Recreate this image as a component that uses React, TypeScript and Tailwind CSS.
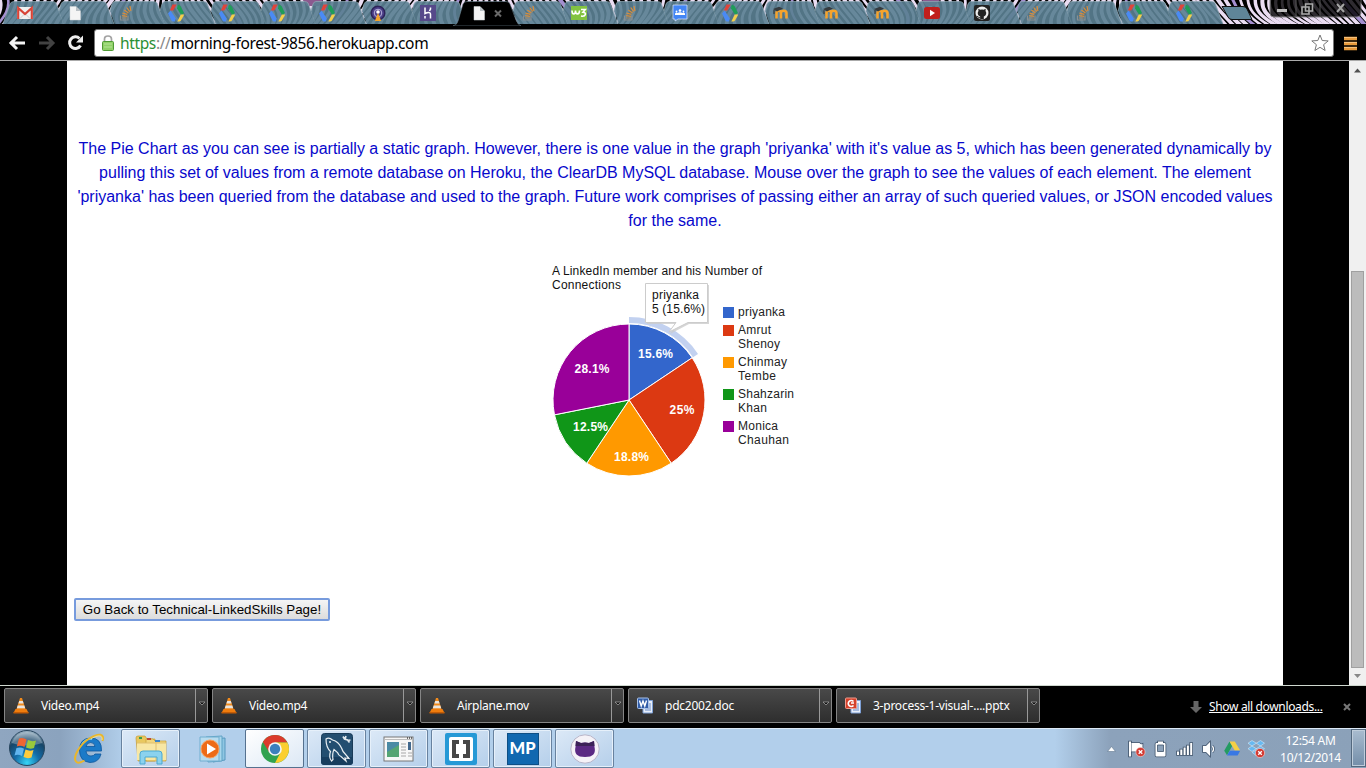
import React from "react";

const ZEBRA: string[] = [];
for (let i = -4; i < 220; i++) {
  const x = i * 6.6;
  const right = x > 1205;
  const a = right ? 4 * Math.sin(i * 0.3) : 9 * Math.sin(i * 0.13);
  const b = right ? -18 + 4 * Math.sin(i * 0.25) : 14 * Math.sin(i * 0.13 + 0.9);
  ZEBRA.push(
    `M${(x + a - (right ? 8 : 0)).toFixed(1)} -2 C${(x + b * 0.3).toFixed(1)} 8 ${(x - a).toFixed(1)} 16 ${(x - b).toFixed(1)} 28`
  );
}

const Doc = () => (
  <>
    <path d="M3 1.500h6l4.500 4.500v9H3z" fill="#f4f4f4" stroke="#cfd4d8" strokeWidth=".5" />
    <path d="M9 1.500v4.500h4.500z" fill="#b9c0c5" />
  </>
);
const Gmail = () => (
  <>
    <rect x="0" y="2" width="16" height="12" rx="1" fill="#f1f1f1" />
    <path d="M3 13.500 8 8.500l5 5" stroke="#ccc" fill="none" />
    <path d="M1.200 14V3L8 9l6.800-6v11" stroke="#d84437" strokeWidth="2.200" fill="none" />
  </>
);
const Stack = () => (
  <g fill="none" transform="translate(1.5 .5)">
    <path d="M1 10v4.500h7.500V10" stroke="#8a9094" strokeWidth="1.200" />
    <path d="M2.500 12.500h4.800" stroke="#9b8a72" strokeWidth="1.200" />
    <path d="M2.600 10.200l5 .6M3 7.600l4.900 1.300M4.800 4.600l4.200 2.800M7.200 2l3 4.200M10.500.5l.9 5" stroke="#d98d3a" strokeWidth="1.200" />
  </g>
);
const GDev = () => (
  <>
    <path d="M4.500-.5H8.700L5.300 5.500H1.800z" fill="#e0443a" />
    <path d="M9.800-.3q2 0 3 1.800L16 8l-2.800 2L9 3.200z" fill="#1f9d58" />
    <path d="M12.800 9.500h3.500L13 15.500q-.7 1-2 1H9.300z" fill="#f3cf4a" />
    <path d="M0 8.500 2.500 5.500 7.800 13.500 6.800 16.500H5q-1 0-1.800-1.500z" fill="#4a8af4" />
  </>
);
const Cast = () => (
  <>
    <circle cx="8" cy="8" r="6.800" fill="#4c3f88" stroke="#2d2459" strokeWidth="1.500" />
    <circle cx="8" cy="8" r="3.800" fill="none" stroke="#b8b2dc" />
    <circle cx="8" cy="7" r="1.800" fill="#fff" />
    <path d="M8 8l3.200 8H4.800z" fill="#f3a42c" />
  </>
);
const Heroku = () => (
  <>
    <rect width="16" height="16" fill="#56498a" />
    <path d="M5 2.500v6c3-1.500 5.500-1.300 5.500.5v4.500M10.500 2.500v1.500L9.500 6M5 11v2.500" stroke="#fff" strokeWidth="1.500" fill="none" />
  </>
);
const W3 = () => (
  <>
    <rect x="0" y="1" width="16" height="14" fill="#82c341" />
    <path d="M1 5.500c0 4.500 3.500 4.500 3.500 0 0 4.500 4 4.500 4 0M10 4.500h4.300L12 7.300c4 0 3 4.700-2 3.700" stroke="#fff" strokeWidth="1.600" fill="none" />
  </>
);
const Groups = () => (
  <>
    <path d="M1 0h14v14H6l-3 2v-2H1z" fill="#4285f4" />
    <path d="M1 0h14v14H6l-3 2v-2H1z" stroke="#dbe8ff" strokeWidth=".7" fill="none" />
    <path d="M3 10V8.500q1.500-1.500 2.500-.5 2.500-1.500 5 0 1-1 2.500.5V10z" fill="#fff" />
    <circle cx="8" cy="5.500" r="1.300" fill="#fff" /><circle cx="4.500" cy="6.500" r=".9" fill="#fff" /><circle cx="11.500" cy="6.500" r=".9" fill="#fff" />
  </>
);
const Moodle = () => (
  <>
    <path d="M3.500 13.500V8c0-3 4.500-3 4.500 0v5.500V8c0-3 5.500-3 5.500 0v5.500" stroke="#f7a42c" strokeWidth="2.500" fill="none" />
    <path d="M0 4 6 1.800l4 1.700-6 3z" fill="#363b3f" />
    <path d="M1 5v4" stroke="#333" />
  </>
);
const Tube = () => (
  <>
    <rect x="0" y="2" width="16" height="12" rx="2.500" fill="#c01f1c" />
    <path d="M6 4.800 11 8l-5 3.200z" fill="#fff" />
  </>
);
const Hub = () => (
  <>
    <rect width="16" height="16" rx="2" fill="#222" />
    <circle cx="8" cy="8" r="6.500" fill="#eee" />
    <path d="M6.200 14v-2.500C3.500 10.500 3.300 7.500 4.500 6L4.300 3.800l2 .9q1.700-.4 3.400 0l2-.9-.2 2.200c1.200 1.500 1 4.500-1.700 5.500V14z" fill="#222" />
    <path d="M3 11.500q1.500 0 2 1.300h1.500" stroke="#222" fill="none" />
  </>
);

const TABS: React.FC[] = [
  Gmail, Doc, Stack, GDev, GDev, GDev, GDev, Cast, Heroku, Doc, Stack, W3, Stack, Groups, GDev,
  Moodle, Moodle, Moodle, Tube, Hub, Stack, Stack, GDev, GDev,
];

function Tab({ Icon, i }: { Icon: React.FC; i: number }) {
  const active = i === 9;
  return (
    <div className={active ? "relative z-10 h-[26px] w-[50.4px] shrink-0" : "relative h-[26px] w-[50.4px] shrink-0"}>
      <svg className="block overflow-visible" width="50.4" height="26">
        {active ? (
          <path d="M-5 26Q-1 25 0 21L5 4Q6 1.500 9 1.500H48Q51 1.500 52 4L58 20Q60 25 63 26z" fill="#000" stroke="#6d8490" strokeWidth=".6" />
        ) : (
          <>
            <path
              d={i === 0 ? "M-1 24 6 4Q7 1.500 10 1.500H48Q51 1.500 52 3L60 24z" : "M9.600 24 5 11 7 4Q8 1.500 10 1.500H48Q51 1.500 52 3L60 24z"}
              fill="rgba(90,128,146,0.91)"
            />
            <path d={i === 0 ? "M-1 24 6 4Q7 1.500 10 1.500H48Q51 1.500 52 3L60 24" : "M5 11 7 4Q8 1.500 10 1.500H48Q51 1.500 52 3L60 24"} fill="none" stroke="#8fa9b5" strokeWidth=".7" />
          </>
        )}
        <g transform="translate(13 5)">
          <Icon />
        </g>
        {active && <path d="M37 10.500l6 6M43 10.500l-6 6" stroke="#6a6a6a" strokeWidth="2" />}
      </svg>
    </div>
  );
}

const COLORS = ["#3366cc", "#dc3912", "#ff9900", "#109618", "#990099"];
const VALUES = [5, 8, 6, 4, 9];

function Pie() {
  let acc = 0;
  const pt = (f: number, r: number) => {
    const t = f * 2 * Math.PI;
    return `${(89 + r * Math.sin(t)).toFixed(2)} ${(144 - r * Math.cos(t)).toFixed(2)}`;
  };
  const label = (x: number, y: number, s: string, w: number) => (
    <text key={s} x={x} y={y} textLength={w} fontSize="12" fontWeight="bold" fill="#fff">{s}</text>
  );
  const f0 = 5 / 32;
  const legend: [string, number, number, number][] = [
    ["priyanka", 60, 47, 0], ["Amrut", 78, 33, 1], ["Shenoy", 92, 42, -1], ["Chinmay", 110, 49, 2], ["Tembe", 124, 38, -1],
    ["Shahzarin", 142, 56, 3], ["Khan", 156, 29, -1], ["Monica", 174, 40, 4], ["Chauhan", 188, 51, -1],
  ];
  return (
    <svg width="270" height="230" className="block" fontFamily="'Liberation Sans', Arial, sans-serif">
      <text x="12" y="19" textLength="210" fontSize="12" fill="#111">A LinkedIn member and his Number of</text>
      <text x="12" y="33" textLength="69" fontSize="12" fill="#111">Connections</text>
      <path d={`M${pt(0, 77)}L${pt(0, 83)}A83 83 0 0 1 ${pt(f0, 83)}L${pt(f0, 77)}A77 77 0 0 0 ${pt(0, 77)}z`} fill="#c2d1f0" />
      {VALUES.map((v, i) => {
        const a = acc / 32;
        acc += v;
        return <path key={i} d={`M89 144L${pt(a, 76)}A76 76 0 0 1 ${pt(acc / 32, 76)}z`} fill={COLORS[i]} stroke="#fff" strokeWidth="1" />;
      })}
      {label(98, 102, "15.6%", 35)}
      {label(129.500, 158, "25%", 25)}
      {label(74, 205, "18.8%", 35)}
      {label(33, 175, "12.5%", 35)}
      {label(34.500, 117, "28.1%", 35)}
      {legend.map(([s, y, w, c]) => (
        <g key={s}>
          {c >= 0 && <rect x="183" y={y - 9} width="11" height="11" fill={COLORS[c]} />}
          <text x="198" y={y} textLength={w} fontSize="12" fill="#222">{s}</text>
        </g>
      ))}
      <path d="M107 29H169V68H149L130 78L137 68H107z" fill="#ccc" opacity=".8" />
      <path d="M105.500 27.500H167.500V66.500H148L129 76L136 66.500H105.500z" fill="#fff" stroke="#ccc" />
      <text x="112" y="43" textLength="47" fontSize="12" fill="#111">priyanka</text>
      <text x="112" y="57" textLength="53" fontSize="12" fill="#111">5 (15.6%)</text>
    </svg>
  );
}

const Cone = () => (
  <svg width="16" height="17" viewBox="0 0 16 17">
    <path d="M7 1h2l3.500 11h-9z" fill="#f08a1c" />
    <path d="M6.200 4h3.600l.8 2.500H5.400zM4.700 8.500h6.600l.9 2.700H3.800z" fill="#e9e4de" />
    <path d="M2.500 12h11l2 4H.5z" fill="#ef7d0e" />
    <path d="M.5 15h15v1.500H.5z" fill="#c55c05" />
  </svg>
);
const Office = ({ word }: { word: boolean }) => (
  <svg width="16" height="17" viewBox="0 0 16 17">
    <path d="M6 3.500h9.500V16H6z" fill="#e8effa" stroke="#7ea0d6" />
    <path d="M9 7h5M9 9h5M9 11h5M8 13h6" stroke="#6689c4" />
    <rect x=".5" y="1" width="11" height="10.500" rx="1" fill={word ? "#315da8" : "#d5412b"} stroke={word ? "#a8c1e8" : "#ee9c8e"} />
    {word ? <path d="M2.500 3.500 4.200 9 6 4l1.800 5 1.700-5.500" stroke="#fff" strokeWidth="1.400" fill="none" /> : <path d="M8.500 4.500A3 3 0 1 0 8.500 8.500M6 6h3" stroke="#fff" strokeWidth="1.600" fill="none" />}
  </svg>
);

const DOWNLOADS = [
  { name: "Video.mp4", icon: <Cone /> },
  { name: "Video.mp4", icon: <Cone /> },
  { name: "Airplane.mov", icon: <Cone /> },
  { name: "pdc2002.doc", icon: <Office word /> },
  { name: "3-process-1-visual-....pptx", icon: <Office word={false} /> },
];

const Orb = () => (
  <svg width="40" height="38" viewBox="0 0 40 38">
    <defs>
      <radialGradient id="orb" cx=".5" cy=".92" r=".9">
        <stop offset="0" stopColor="#36d5f6" /><stop offset=".4" stopColor="#136ba7" /><stop offset=".75" stopColor="#174567" /><stop offset="1" stopColor="#9bb3c4" />
      </radialGradient>
    </defs>
    <circle cx="20" cy="19" r="17.500" fill="url(#orb)" stroke="#28465f" />
    <path d="M4.500 14Q9 3 20 3t15.500 11Q20 19 4.500 14z" fill="#fff" opacity=".28" />
    <path d="M12 9.500q4-1.500 7.500 1L17.500 18q-4-2-7.700-.5z" fill="#ef6533" />
    <path d="M21 11q4 2 8 .5L27 19q-4 1.500-8-.5z" fill="#9bc93c" />
    <path d="M9.500 19q4-1.500 7.500.8L15 27q-4-2-7.500-.5z" fill="#61b5ee" />
    <path d="M18.500 20.500q4 2 8 .5l-2 7.500q-4 1.500-8-.5z" fill="#fdcc3d" />
  </svg>
);
const IE = () => (
  <svg width="34" height="34" viewBox="0 0 34 34">
    <path d="M29.500 19H14q.5 5 5 5 2.800 0 4-2h6q-2 8.500-11 8.500Q7.500 29.500 7.500 18T18.500 6Q30 6 29.500 19zM14 14.500h9q-.5-4-4.300-4T14 14.500z" fill="#1b7ac8" stroke="#0c579c" strokeWidth=".8" />
    <path d="M10 12Q14 6.500 20 7" stroke="#7cd1f8" strokeWidth="1.500" fill="none" />
    <path d="M30.500 9C33 2 27 .5 18 6 8 12 .5 25 4 29.500c1.500 2 5 1 8.500-1" fill="none" stroke="#e9b62c" strokeWidth="2" />
    <path d="M30 8C31 2.500 25 3 19 7" fill="none" stroke="#f9e283" />
  </svg>
);
const Folder = () => (
  <svg width="34" height="34" viewBox="0 0 34 34">
    <path d="M2 6q0-2 2-2h7l2 3h8v22H4z" fill="#e9c85e" stroke="#c69b35" strokeWidth=".7" />
    <path d="M12 7h7l2 2h11v20H12z" fill="#f2d67c" stroke="#c69b35" strokeWidth=".7" />
    <path d="M3 11h29v17H3z" fill="#f8e7a4" />
    <path d="M3 11h29M22 10v18" stroke="#dfc070" />
    <path d="M5 5h3v2H5z" fill="#3b9c4c" /><path d="M13 6h4v2h-4z" fill="#bd4a35" /><path d="M21 8h5v2h-5z" fill="#3b86c9" />
    <path d="M6 32V22q0-3 3-3h16q3 0 3 3v10h-5v-7H11v7z" fill="#8bd2ee" stroke="#4ba9d2" />
  </svg>
);
const Player = () => (
  <svg width="32" height="30" viewBox="0 0 32 30">
    <path d="M14 5l14-1v22l-12 2z" fill="#8fc6e2" stroke="#5799bf" />
    <path d="M9 3l16-1v25l-14 1z" fill="#a9d7ec" stroke="#5fa2c5" />
    <path d="M3 3h19v24H3z" fill="#b8dcef" stroke="#71aed0" />
    <circle cx="13" cy="15" r="9" fill="#ed6b17" stroke="#f8a05f" />
    <path d="M10 9.500 19 15l-9 5.500z" fill="#fff" />
  </svg>
);
const Chrome = () => (
  <svg width="30" height="30" viewBox="-15 -15 30 30">
    <circle r="14" fill="#31a350" />
    <path d="M-12.100-7.100 -5.600 3.500 0-6.500H12.400A14 14 0 0 0-12.100-7.100z" fill="#db3b2c" />
    <path d="M0-6.500H12.400A14 14 0 0 1 0 14L5.700 3z" fill="#fbcf2f" />
    <circle r="6.800" fill="#f5f7f8" /><circle r="5.200" fill="#3c80bd" />
  </svg>
);
const MySQL = () => (
  <svg width="32" height="32" viewBox="0 0 32 32">
    <rect x=".5" y=".5" width="31" height="31" rx="3" fill="#234e70" stroke="#193b58" />
    <path d="M0 24h32v5q0 3-3 3H3q-3 0-3-3z" fill="#173d5e" />
    <path d="M10.500 28q-3-4-1-9.500-4.500-4-4.500-12.500 3-2 6.500 1 6 1.500 9 8 1 4 5 7.500l2.500 3-4-.5 1 3-5-4.500q-2.500-1-3.500-4l-3.500-3q-2 4-1 10z" stroke="#e8eef2" strokeWidth="1.200" fill="none" />
    <circle cx="9" cy="9" r=".9" fill="#fff" />
    <path d="M22 3.500l1.500 2.500 3 1 2 2.500M25 3l-1 3M29.500 7l-3 .5" stroke="#dfe7ec" strokeWidth="1.700" fill="none" />
  </svg>
);
const AppWindow = () => (
  <svg width="32" height="26" viewBox="0 0 32 26">
    <rect x="1" y="1" width="29" height="24" fill="#f7f7f7" stroke="#777" />
    <path d="M1 3.500h29" stroke="#bcbcbc" /><path d="M24 2h1M26 2h1M28 2h1" stroke="#444" strokeWidth="1.500" />
    <path d="M4 6h12v15H4z" fill="#4a8aa5" /><path d="M4 16l12-7v12H4z" fill="#55a573" />
    <path d="M18 8h5M18 11h5M18 14h5M18 17h5M18 20h5M25 17h4M25 20h4" stroke="#a7a7a7" /><path d="M25 6h3v8h-3z" fill="#43698e" />
  </svg>
);
const Brackets = () => (
  <svg width="32" height="32" viewBox="0 0 32 32">
    <rect width="32" height="32" rx="2" fill="#2699d6" />
    <rect x="4" y="4" width="24" height="24" rx="2" fill="#fff" />
    <path d="M7 7h7v4h-3v10h3v4H7zM25 7h-7v4h3v10h-3v4h7z" fill="#474747" />
  </svg>
);
const MP = () => (
  <div className="flex h-8 w-8 items-center justify-center border border-[#0e4f85] bg-[#1068b0] font-['Lato',sans-serif] text-[16.500px] leading-none font-black text-white">MP</div>
);
const Cat = () => (
  <svg width="30" height="30" viewBox="0 0 30 30">
    <circle cx="15" cy="15" r="14.200" fill="#f5f2f7" stroke="#b8b5c9" />
    <path d="M6 7l5 2q4-1 8 0l5-2 .5 6Q27 23 15 23T5.500 13z" fill="#5b2983" />
    <path d="M6 7l5 2q4-1 8 0l5-2 .5 5h-19z" fill="#3c2157" />
  </svg>
);

const TASKS = [
  { el: <IE />, open: false }, { el: <Folder />, open: true }, { el: <Player />, open: false }, { el: <Chrome />, open: true, hot: true },
  { el: <MySQL />, open: true }, { el: <AppWindow />, open: true }, { el: <Brackets />, open: true }, { el: <MP />, open: true }, { el: <Cat />, open: true },
];

const BadX = ({ x, y }: { x: number; y: number }) => (
  <g transform={`translate(${x} ${y})`}>
    <circle r="4.600" fill="#d33a32" stroke="#f6d7d4" strokeWidth=".6" />
    <path d="M-1.800-1.800l3.600 3.600M1.800-1.800l-3.600 3.600" stroke="#fff" strokeWidth="1.300" />
  </g>
);

export default function App() {
  return (
    <div className="flex h-[768px] w-[1366px] flex-col overflow-hidden bg-black font-['Noto_Sans',sans-serif]">
      <header className="relative h-[26px] shrink-0 overflow-hidden bg-black">
        <svg className="absolute inset-0" width="1366" height="24">
          {ZEBRA.map((d, i) => (
            <path key={i} d={d} stroke={i % 17 === 5 ? "#a58fd0" : "#eadcf2"} strokeWidth={3.300 + 0.7 * Math.sin(i)} fill="none" />
          ))}
          <path d="M303 0h20l-4 6h-12zM922 0h18l-5 6h-9z" fill="#8b5a8f" />
        </svg>
        <div className="relative flex pl-1">
          {TABS.map((T, i) => <Tab key={i} Icon={T} i={i} />)}
          <svg width="45" height="26" className="ml-[8px] block shrink-0">
            <path d="M1 6.500H22Q25 6.500 26 9L31 19.500H11Q8 19.500 7 17L2 8z" fill="#5f8598" stroke="#111" />
          </svg>
          <svg width="94" height="26" className="ml-[3px] block shrink-0">
            <path d="M1-1V13Q1 17 5 17H88Q92 17 92 13V-1z" fill="#000" opacity=".8" stroke="#777" />
            <path d="M27 0v17M51 0v17" stroke="#555" />
            <path d="M8 10.500h10" stroke="#bbb" strokeWidth="3" />
            <path d="M36.500 4h7v7h-7zM33 7h7v7h-7z" stroke="#aaa" strokeWidth="1.600" fill="#111" />
            <path d="M68 4l7 8M75 4l-7 8" stroke="#a5a5a5" strokeWidth="2" />
          </svg>
        </div>
      </header>

      <div className="flex h-[35px] shrink-0 items-start border-b border-[#aaa] pt-[3px]">
        <svg width="94" height="28" className="shrink-0">
          <path d="M10 14h15M17 8l-6 6 6 6" stroke="#f3f3f3" strokeWidth="3" fill="none" />
          <path d="M39 14h14M47 8l6 6-6 6" stroke="#424242" strokeWidth="3" fill="none" />
          <path d="M79.500 9.500a5.800 5.800 0 1 0 1 7" stroke="#eee" strokeWidth="3" fill="none" /><path d="M83 6.500v7h-7z" fill="#eee" />
        </svg>
        <div className="flex h-[28px] w-[1240px] items-center rounded-[3px] border border-[#777] bg-white pl-[7px]">
          <svg width="12" height="16" viewBox="0 0 12 16" className="shrink-0">
            <path d="M2.500 7V4Q2.500 1 6 1t3.500 3v3" fill="none" stroke="#a3a3a3" strokeWidth="1.700" />
            <rect x=".5" y="6.500" width="11" height="9" rx="1" fill="#8fd067" stroke="#4f9a34" /><path d="M2 9h8M2 12h8" stroke="#b6e498" />
          </svg>
          <div className="ml-[6px] w-[1192px] pb-px text-[15.500px] leading-6 tracking-[-0.370px] whitespace-nowrap text-black"><span className="text-[#2b8f35]">https</span><span className="text-[#888]">://</span>morning-forest-9856.herokuapp.com</div>
          <svg width="18" height="18" viewBox="0 0 18 18" className="-ml-px shrink-0"><path d="M9 1l2.200 5.500 6 .4-4.600 3.800 1.500 5.800L9 13.300l-5.100 3.200 1.500-5.800L.8 6.900l6-.4z" fill="#fff" stroke="#777" /></svg>
        </div>
        <svg width="32" height="28" className="shrink-0"><path d="M10 9.500h13M10 14.500h13M10 19.500h13" stroke="#e79a3c" strokeWidth="3.600" /><path d="M10 8.500h13M10 13.500h13M10 18.500h13" stroke="#f6c07a" /></svg>
      </div>

      <div className="flex h-[624px] shrink-0">
        <main className="ml-[67px] flex w-[1216px] flex-col bg-white pt-[76px]">
          <p className="text-center font-['Liberation_Sans',Arial,sans-serif] text-[16px] leading-6 whitespace-nowrap text-[#0808cc]">
            <span className="block">The Pie Chart as you can see is partially a static graph. However, there is one value in the graph 'priyanka' with it's value as 5, which has been generated dynamically by</span>
            <span className="block">pulling this set of values from a remote database on Heroku, the ClearDB MySQL database. Mouse over the graph to see the values of each element. The element</span>
            <span className="block">'priyanka' has been queried from the database and used to the graph. Future work comprises of passing either an array of such queried values, or JSON encoded values</span>
            <span className="block">for the same.</span>
          </p>
          <div className="mt-[23px] ml-[473px] h-[230px]"><Pie /></div>
          <button className="mt-[112px] ml-[7px] h-[23px] w-[256px] rounded-[2px] border-2 border-[#779bdd] bg-gradient-to-b from-[#f5f5f5] to-[#dcdcdc] font-['Liberation_Sans',Arial,sans-serif] text-[13.333px] leading-[18px] whitespace-nowrap text-black">Go Back to Technical-LinkedSkills Page!</button>
        </main>
        <div className="ml-[66px] flex w-[17px] flex-col items-center bg-[#f0f0f0]">
          <svg width="17" height="210" className="shrink-0"><path d="M5 11.500 8.500 7.500l3.500 4z" fill="#505050" /></svg>
          <div className="h-[397px] w-[13px] border border-[#a0a0a0] bg-[#bcbcbc]" />
          <svg width="17" height="17"><path d="M5 6l3.500 4L12 6z" fill="#888" /></svg>
        </div>
      </div>

      <div className="flex h-[43px] shrink-0 border-t border-[#cfd8cf] pt-[2px] pl-[4px] text-[12px] text-white">
        {DOWNLOADS.map((d, i) => (
          <div key={i} className="mr-1 flex h-[35px] w-[204px] shrink-0 items-center rounded-[2px] border border-[#858585] bg-gradient-to-b from-[#494949] to-[#2e2e2e]">
            <div className="flex h-full w-[191px] items-center border-r border-[#999] pl-[8px]">
              {d.icon}
              <span className="ml-[12px] text-[12px] tracking-[-0.240px] whitespace-nowrap">{d.name}</span>
            </div>
            <svg width="11" height="20" className="mb-1"><path d="M3 8h6l-3 3z" fill="#111" stroke="#aaa" strokeWidth=".7" /></svg>
          </div>
        ))}
        <div className="flex h-[38px] flex-1 items-center pl-[146px]">
          <svg width="12" height="14" className="shrink-0"><path d="M3.500 1h5v6H12l-6 6-6-6h3.500z" fill="#666" /></svg>
          <span className="ml-[7px] w-[114px] text-[12px] tracking-[-0.340px] whitespace-nowrap underline">Show all downloads...</span>
          <svg width="8" height="8" className="ml-[20px] shrink-0"><path d="M1 1l6 6M7 1 1 7" stroke="#777" strokeWidth="2" /></svg>
        </div>
      </div>

      <footer className="flex h-[40px] shrink-0 border-t border-[#dce9f6] bg-[linear-gradient(90deg,#8fa6c0_0px,#8ba3be_60px,#b2cfeb_125px,#b2cfeb_1055px,#8ca2bb_1110px,#8ba1b9_1366px)]">
        <div className="flex w-[58px] shrink-0 justify-center pr-[4px]"><Orb /></div>
        {TASKS.map((t, i) => (
          <div key={i} className={t.open ? (t.hot ? "mr-[2px] ml-px flex h-[39px] w-[59px] shrink-0 items-center justify-center rounded-[2px] border border-[#55718f] bg-gradient-to-br from-white to-[#dce8f5]" : "mr-[2px] ml-px flex h-[39px] w-[59px] shrink-0 items-center justify-center rounded-[2px] border border-[#68829f] bg-gradient-to-br from-[#dce9f7] to-[#b5cfea] shadow-[inset_0_0_0_1px_#e6f0fa]") : "mr-[2px] ml-px flex h-[39px] w-[59px] shrink-0 items-center justify-center"}>{t.el}</div>
        ))}
        <div className="ml-auto flex shrink-0">
          <svg width="162" height="39" className="shrink-0">
            <path d="M3.500 22.500 7.500 17.500l4 5z" fill="#fff" stroke="#627890" strokeWidth=".6" />
            <g stroke="#40546b" strokeWidth="1.600" fill="#fff" paintOrder="stroke">
              <path d="M25 12.500h2v15h-2zM27.500 14h8q1 2 3 1v8q-3 1-4-.5h-7z" />
              <path d="M54 12.500h5v1.500h1.500q1 0 1 1v11.500q0 1-1 1h-8q-1 0-1-1V15q0-1 1-1H54z" />
              <path d="M73 22.500h2v3.500h-2zM76.300 20.500h2v5.500h-2zM79.600 18.500h2v7.500h-2zM82.900 16.500h2v9.500h-2zM86.200 14h2v12h-2z" />
              <path d="M99 17h3l4-4v14l-4-4h-3z" />
            </g>
            <path d="M53.500 16h6v6.500h-6z" fill="#8ba1b9" stroke="#40546b" strokeWidth=".8" />
            <path d="M108.500 17q2 3 0 6" stroke="#40546b" strokeWidth="2.600" fill="none" />
            <path d="M108.500 17q2 3 0 6" stroke="#fff" strokeWidth="1.300" fill="none" />
            <BadX x={36.5} y={23} />
            <path d="M125.500 12.500l2.700 4.500-5.200 9.300-2.800-4.600z" fill="#249b62" /><path d="M125.500 12.500h5.300l5.400 9h-5.400z" fill="#f6cf45" /><path d="M125.700 21.700h10.500l-2.600 4.700H123z" fill="#3978e4" />
            <path d="M148 11.500l4.300 2.700-4.300 2.800-4-2.800zM156.500 11.500l4 2.700-4 2.800-4.200-2.800zM148 17l4.300 2.700-4.300 2.800-4-2.800zM156.500 17l4 2.700-4 2.800-4.200-2.800zM152.200 21l4 2.500-4 3-4-3z" fill="#68b9f0" stroke="#e4f4ff" strokeWidth=".5" />
            <BadX x={156} y={24} />
          </svg>
          <div className="w-[85px] pt-[3px] pl-[4px] text-center text-[12px] leading-[17px] tracking-[-0.300px] text-white"><div>12:54 AM</div><div>10/12/2014</div></div>
          <div className="h-[38px] w-[15px] border border-[#53687e] bg-gradient-to-b from-[#a9bccf] to-[#748ea9] shadow-[inset_0_0_0_1px_#bfcddb]" />
        </div>
      </footer>
    </div>
  );
}
